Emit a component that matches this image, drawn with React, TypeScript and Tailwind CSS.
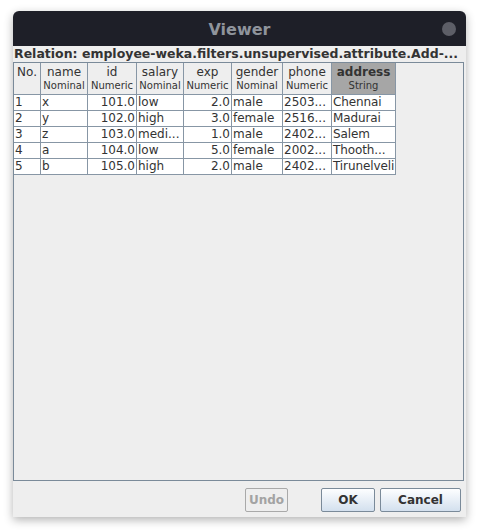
import React from "react";

const font = { fontFamily: '"DejaVu Sans", "Liberation Sans", sans-serif' };

const columns = [
  { name: "No.", type: "", width: "w-[27px]", align: "left" },
  { name: "name", type: "Nominal", width: "w-[47px]", align: "left" },
  { name: "id", type: "Numeric", width: "w-[49px]", align: "right" },
  { name: "salary", type: "Nominal", width: "w-[47px]", align: "left" },
  { name: "exp", type: "Numeric", width: "w-[48px]", align: "right" },
  { name: "gender", type: "Nominal", width: "w-[51px]", align: "left" },
  { name: "phone", type: "Numeric", width: "w-[49px]", align: "left" },
  { name: "address", type: "String", width: "w-[64px]", align: "left" },
];

const rows = [
  ["1", "x", "101.0", "low", "2.0", "male", "2503...", "Chennai"],
  ["2", "y", "102.0", "high", "3.0", "female", "2516...", "Madurai"],
  ["3", "z", "103.0", "medi...", "1.0", "male", "2402...", "Salem"],
  ["4", "a", "104.0", "low", "5.0", "female", "2002...", "Thooth..."],
  ["5", "b", "105.0", "high", "2.0", "male", "2402...", "Tirunelveli"],
];

const HeaderCell = ({ col, selected }: { col: (typeof columns)[number]; selected: boolean }) => (
  <div
    className={`${col.width} shrink-0 h-[32px] border-r border-b border-[#8796a5] flex flex-col items-center overflow-hidden ${
      selected ? "bg-[#a6a6a6]" : "bg-[#eeeeee]"
    }`}
  >
    <span className={`text-[12px] leading-[15px] mt-[2px] text-[#333333] ${selected ? "font-bold" : ""}`}>
      {col.name}
    </span>
    {col.type && (
      <span className="text-[10px] leading-[12px] text-[#333333] whitespace-nowrap">{col.type}</span>
    )}
  </div>
);

const Button = ({ label, disabled, className }: { label: string; disabled?: boolean; className: string }) => (
  <button
    className={`${className} h-[24px] rounded-[2px] border text-[12px] font-bold ${
      disabled
        ? "border-[#a9a9a9] bg-[#eeeeee] text-[#a3a3a3]"
        : "border-[#7a8a99] bg-gradient-to-b from-[#fdfeff] to-[#d3e0ee] text-[#333333]"
    }`}
    style={font}
  >
    {label}
  </button>
);

export default function App() {
  return (
    <div className="w-[479px] h-[532px] bg-white pt-[11px] pl-[13px]" style={font}>
      <div className="w-[453px] h-[506px] flex flex-col rounded-t-[6px] shadow-[0_3px_10px_rgba(0,0,0,0.3)] bg-[#eeeeee]">
        {/* title bar */}
        <div className="h-[35px] shrink-0 rounded-t-[6px] bg-[#1e1f28] flex items-center justify-center relative">
          <span className="text-[16px] font-bold text-[#8f949c] mt-[2px]">Viewer</span>
          <span className="absolute right-[10px] top-[11px] w-[14px] h-[14px] rounded-full bg-[#5d5e67]" />
        </div>
        <div className="h-[16px] shrink-0 text-[12.5px] leading-[16px] font-bold text-[#333333] pl-[1px] whitespace-nowrap overflow-hidden">
          Relation: employee-weka.filters.unsupervised.attribute.Add-...
        </div>
        {/* table */}
        <div className="w-[451px] h-[419px] border border-[#7a8a99] bg-[#eeeeee]">
          <div className="flex">
            {columns.map((c, i) => (
              <HeaderCell key={c.name} col={c} selected={i === 7} />
            ))}
          </div>
          {rows.map((r) => (
            <div key={r[0]} className="flex">
              {r.map((v, i) => (
                <div
                  key={i}
                  className={`${columns[i].width} shrink-0 h-[16px] bg-white border-r border-b border-[#8796a5] text-[12px] leading-[15px] text-[#333333] whitespace-nowrap ${
                    i === 7 ? "overflow-visible tracking-[-0.1px]" : "overflow-hidden"
                  } ${columns[i].align === "right" ? "text-right pr-[1px]" : "text-left pl-[1px]"}`}
                >
                  {v}
                </div>
              ))}
            </div>
          ))}
        </div>
        {/* buttons */}
        <div className="flex items-center h-[36px] pt-[1px]">
          <Button label="Undo" disabled className="ml-[232px] w-[43px]" />
          <Button label="OK" className="ml-[33px] w-[54px]" />
          <Button label="Cancel" className="ml-[5px] w-[81px]" />
        </div>
      </div>
    </div>
  );
}
